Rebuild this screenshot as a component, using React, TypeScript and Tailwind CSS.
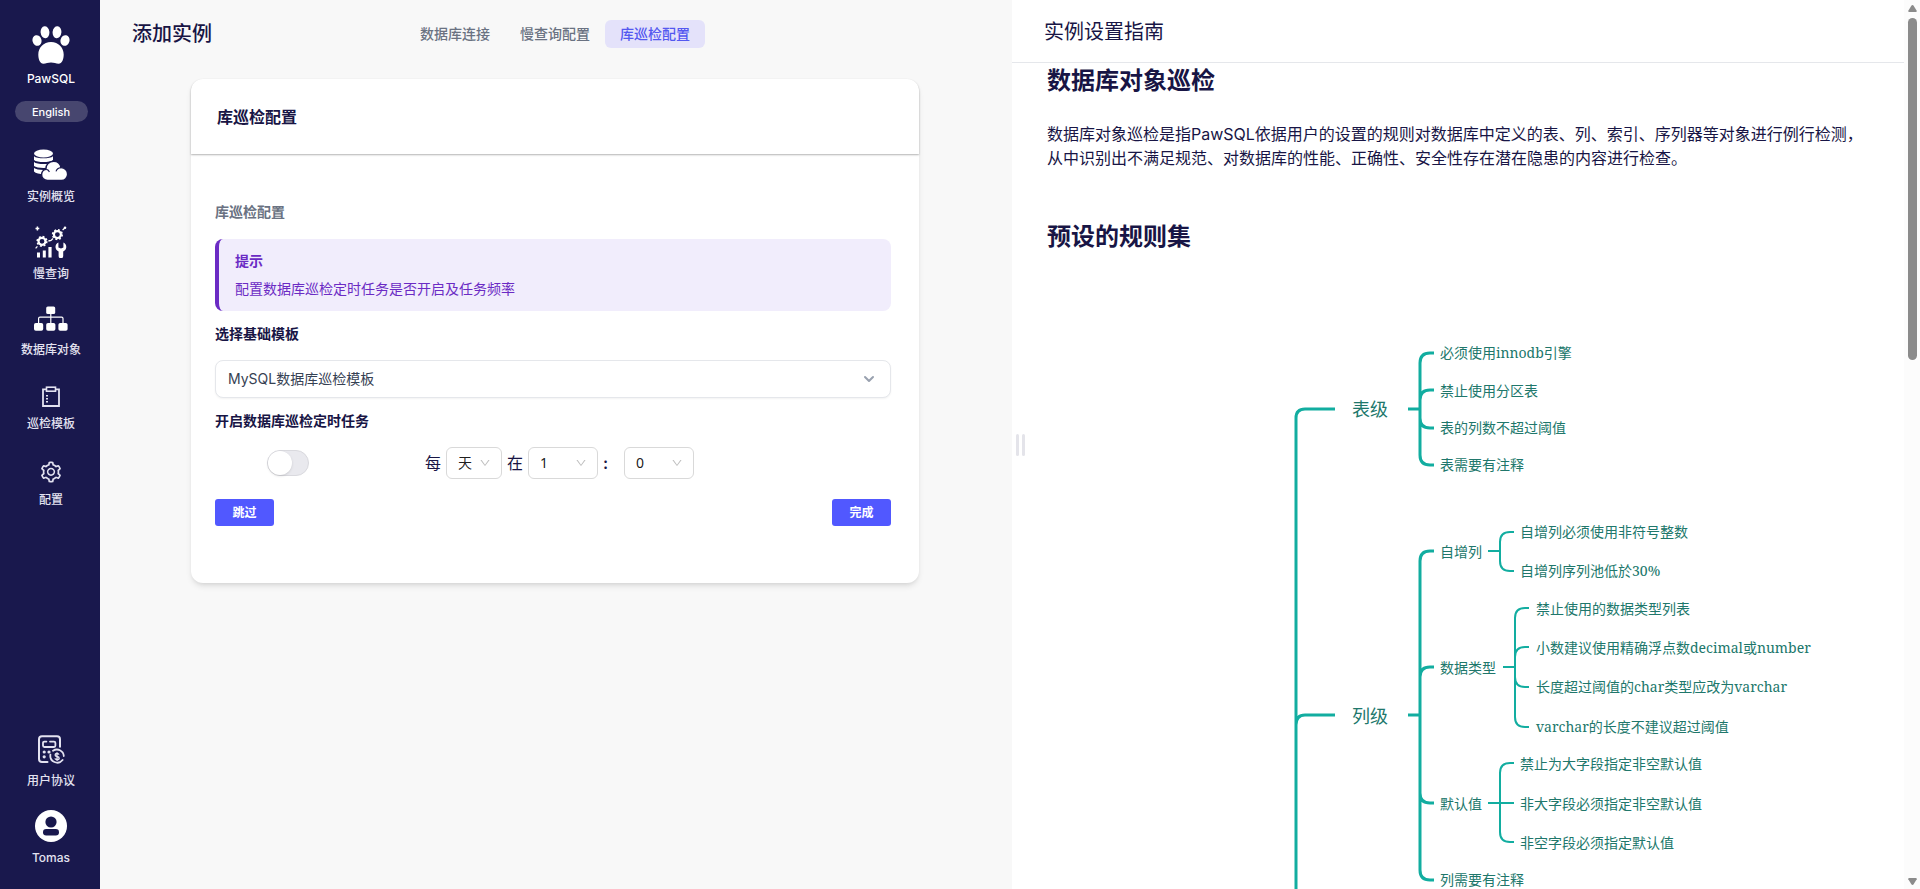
import React from "react";
import { AiOutlineDown, AiOutlineSetting } from "react-icons/ai";
import { HiChevronDown } from "react-icons/hi";

const PawIcon = () => (
  <svg viewBox="0 0 38 38" className="h-[38px] w-[38px]" fill="currentColor" aria-hidden="true">
    <ellipse cx="5" cy="14.5" rx="4.5" ry="5.4" transform="rotate(-14 5 14.5)" />
    <ellipse cx="13" cy="6.2" rx="4.4" ry="6" transform="rotate(-5 13 6.2)" />
    <ellipse cx="25" cy="6.2" rx="4.4" ry="6" transform="rotate(5 25 6.2)" />
    <ellipse cx="33" cy="14.5" rx="4.5" ry="5.4" transform="rotate(14 33 14.5)" />
    <path d="M19 16C11.5 16 6.3 21.6 6.3 28.6C6.3 33.5 8 37.8 11.4 37.8C14 37.8 16 36.6 19 36.6C22 36.6 24 37.8 26.6 37.8C30 37.8 31.7 33.5 31.7 28.6C31.7 21.6 26.5 16 19 16Z" />
  </svg>
);

const DatabaseCloudIcon = () => (
  <svg viewBox="0 0 34 32" className="h-8 w-[34px]" aria-hidden="true">
    <g fill="currentColor">
      <ellipse cx="9.5" cy="4.5" rx="9.5" ry="4" />
      <path d="M0 7.2C3 10 16 10 19 7.2V11C16 13.8 3 13.8 0 11Z" />
      <path d="M0 13C3 15.8 16 15.8 19 13V17C16 19.6 3 19.6 0 17Z" />
      <path d="M0 19C3 21.6 16 21.6 19 19V23C16 26 3 26 0 22.6Z" />
    </g>
    <path
      d="M13.5 31.4C10.2 31.4 7.6 29 7.6 25.8C7.6 23 9.6 20.8 12 20.4C11.6 15.8 15.2 12.2 19.6 12.2C23.6 12.2 26.4 14.9 27 18.6C30.6 18.8 33.6 21.4 33.6 25.2C33.6 28.8 30.8 31.4 27.4 31.4Z"
      fill="currentColor"
      stroke="#19184d"
      strokeWidth="1.4"
    />
    <path d="M12.4 20.4C14 20.6 15 21.6 15.4 23M27 18.6C24.4 18.8 22.6 20.4 22 22.4" fill="none" stroke="#19184d" strokeWidth="1.1" />
  </svg>
);

const AnalysisIcon = () => (
  <svg viewBox="0 0 32 32" className="h-8 w-8" aria-hidden="true">
    <g fill="none" stroke="currentColor">
      <circle cx="7" cy="15.3" r="3.5" strokeWidth="2.2" />
      <circle cx="7" cy="15.3" r="4.8" strokeWidth="1.6" strokeDasharray="1.9 1.87" />
      <circle cx="22.4" cy="8.6" r="3.5" strokeWidth="2.2" />
      <circle cx="22.4" cy="8.6" r="4.8" strokeWidth="1.6" strokeDasharray="1.9 1.87" />
      <path d="M.6 22.4L2.4 20.4M13.4 15L16 14.4L18 12.6M27.6 4L30.4 1.4" strokeWidth="1.3" />
      <path d="M2.4 .6V4.4M.5 2.5H4.3" strokeWidth="1.5" />
    </g>
    <circle cx="30" cy="1.8" r="1.3" fill="currentColor" />
    <g fill="currentColor">
      <path d="M2 26.4H5V31.6H2ZM7.8 24.4H10.8V31.6H7.8ZM13.4 21H16.6V31.6H13.4Z" />
      <path d="M23.4 16.6V21.4L26 22.6L28.4 21.4V16.6C30.6 17.6 31.6 19.6 31.2 21.8C30.9 23.6 29.8 24.8 28.2 25.5V30A2.2 2.2 0 0 1 23.6 30V25.5C22 24.8 20.9 23.6 20.6 21.8C20.2 19.6 21.2 17.6 23.4 16.6Z" />
    </g>
  </svg>
);

const SitemapIcon = () => (
  <svg viewBox="0 0 34 26" className="h-[26px] w-[34px]" aria-hidden="true">
    <g fill="currentColor">
      <rect x="12.2" y="1.5" width="9" height="7.6" rx="1.6" />
      <rect x="0" y="18" width="9.2" height="7.8" rx="1.8" />
      <rect x="12.2" y="18" width="9.2" height="7.8" rx="1.8" />
      <rect x="24.4" y="18" width="9.2" height="7.8" rx="1.8" />
    </g>
    <path d="M16.8 9V18M4.6 18V13.6Q4.6 12.2 6 12.2H27.6Q29 12.2 29 13.6V18" fill="none" stroke="currentColor" strokeWidth="1.2" />
  </svg>
);

const ClipboardIcon = () => (
  <svg viewBox="0 0 20 22" className="h-[22px] w-5" fill="none" stroke="currentColor" aria-hidden="true">
    <path d="M5.5 3.3H2V20H18V3.3H14.5" strokeWidth="1.8" />
    <rect x="5.5" y="1.2" width="9" height="4" strokeWidth="1.6" />
    <path d="M5 9.8H7M5 12.8H7M5 15.8H7" strokeWidth="1.5" />
  </svg>
);

const AgreementIcon = () => (
  <svg viewBox="0 0 28 30" className="h-[30px] w-7" fill="none" stroke="currentColor" aria-hidden="true">
    <path d="M23 12.8V5.2Q23 2.2 20 2.2H5Q2 2.2 2 5.2V25Q2 28 5 28H10.5" strokeWidth="2" strokeLinecap="round" />
    <path d="M9.4 7.6H7.4Q6 7.6 6 9V11.6Q6 13 7.4 13H17Q18.4 13 18.4 11.6V9Q18.4 7.6 17 7.6H13" strokeWidth="1.8" strokeLinecap="round" />
    <g fill="currentColor" stroke="none">
      <circle cx="7.2" cy="18" r="1.6" />
      <circle cx="12" cy="18" r="1.6" />
      <circle cx="7.2" cy="22.8" r="1.6" />
    </g>
    <path d="M16 16.8A6.9 6.9 0 0 1 26.8 22M25.6 26A6.9 6.9 0 0 1 13.4 20.6" strokeWidth="1.8" strokeLinecap="round" />
    <path d="M22 20.6Q21.6 19.5 20 19.5Q18.1 19.5 18.1 20.9Q18.1 22.2 20 22.5Q22.2 22.8 22.2 24.2Q22.2 25.6 20.1 25.6Q18.2 25.6 17.9 24.4M20 18.2V27" strokeWidth="1.3" />
  </svg>
);

const UserIcon = () => (
  <svg viewBox="0 0 32 32" className="h-8 w-8" aria-hidden="true">
    <circle cx="16" cy="16" r="16" fill="currentColor" />
    <circle cx="16" cy="12" r="5.6" fill="#19184d" />
    <rect x="8" y="19" width="16" height="6.4" rx="3.2" fill="#19184d" />
  </svg>
);

type NavItemProps = { label: string; children: React.ReactNode; className?: string; iconBox?: string };

const NavItem = ({ label, children, className = "", iconBox = "h-8 items-center" }: NavItemProps) => (
  <a href="#" className={`flex flex-col items-center text-[#e3e2f0] ${className}`}>
    <span className={`flex justify-center ${iconBox}`}>{children}</span>
    <span className="mt-1.5 text-xs leading-5 font-medium">{label}</span>
  </a>
);

const Sidebar = () => (
  <aside className="flex w-[100px] shrink-0 flex-col items-center bg-[#19184d] pl-0.5 text-white">
    <a href="#" className="mt-[26px] flex flex-col items-center">
      <PawIcon />
      <span className="mt-[5px] text-xs leading-5 font-medium">PawSQL</span>
    </a>
    <button type="button" className="mt-3 h-[21px] w-[73px] rounded-full bg-[#47466f] text-[11px] leading-5 font-medium">
      English
    </button>
    <nav className="mt-[27px] flex flex-col items-center">
      <NavItem label="实例概览"><span className="text-white"><DatabaseCloudIcon /></span></NavItem>
      <NavItem label="慢查询" className="mt-[19px]"><span className="text-white"><AnalysisIcon /></span></NavItem>
      <NavItem label="数据库对象" className="mt-[18px]"><span className="text-white"><SitemapIcon /></span></NavItem>
      <NavItem label="巡检模板" className="mt-5" iconBox="h-7 items-end"><ClipboardIcon /></NavItem>
      <NavItem label="配置" className="mt-[22px]" iconBox="h-7 items-end"><AiOutlineSetting className="h-6 w-6" /></NavItem>
    </nav>
    <nav className="mt-auto flex flex-col items-center pb-[21px]">
      <NavItem label="用户协议"><AgreementIcon /></NavItem>
      <NavItem label="Tomas" className="mt-[19px]"><span className="text-white"><UserIcon /></span></NavItem>
    </nav>
  </aside>
);

type PickerProps = { label: string; options: string[]; className: string };

const Picker = ({ label, options, className }: PickerProps) => (
  <div className={`relative ${className}`}>
    <select
      aria-label={label}
      className="h-8 w-full appearance-none rounded-md border border-[#d9d9d9] bg-white px-[11px] font-['Noto_Sans','Noto_Sans_CJK_SC',sans-serif] text-sm text-black/90"
    >
      {options.map((o) => <option key={o}>{o}</option>)}
    </select>
    <AiOutlineDown className="pointer-events-none absolute top-2.5 right-[11px] h-3 w-3 text-[#bfbfbf]" />
  </div>
);

const tabs = ["数据库连接", "慢查询配置", "库巡检配置"];

const SetupPanel = () => (
  <main className="min-w-0 flex-[911_1_0%] bg-[#f8f8f8] pr-0.5">
    <header className="grid grid-cols-[1fr_auto_1fr] items-center pt-5">
      <h1 className="pl-8 text-xl leading-7 font-medium">添加实例</h1>
      <nav className="flex">
        {tabs.map((tab, i) => (
          <button
            key={tab}
            type="button"
            className={`h-7 rounded-md px-[15px] text-sm font-medium ${i === 2 ? "bg-[#e4e2fa] text-[#5458f0]" : "text-gray-500"}`}
          >
            {tab}
          </button>
        ))}
      </nav>
    </header>

    <section className="mx-auto mt-[31px] w-4/5 rounded-xl bg-white shadow-md">
      <div className="rounded-t-xl px-[26px] pt-6 pb-[23px] shadow-[0_1px_2px_rgba(0,0,0,0.3)]">
        <h2 className="text-base leading-7 font-bold">库巡检配置</h2>
      </div>
      <form className="flex flex-col pt-12 pr-7 pb-[57px] pl-6" onSubmit={(e) => e.preventDefault()}>
        <h3 className="text-sm leading-5 font-semibold text-gray-500">库巡检配置</h3>
        <div className="mt-[17px] flex flex-col gap-2 rounded-lg border-l-4 border-[#6b2bc4] bg-[#f1edfc] px-4 py-3 text-sm leading-5 text-[#6b2bc4]">
          <p className="font-bold">提示</p>
          <p>配置数据库巡检定时任务是否开启及任务频率</p>
        </div>
        <label htmlFor="template" className="mt-[13px] text-sm leading-5 font-bold">选择基础模板</label>
        <div className="relative mt-4">
          <select
            id="template"
            className="h-[38px] w-full appearance-none rounded-lg border border-gray-200 bg-white px-3 text-sm text-gray-700 shadow-xs"
          >
            <option>MySQL数据库巡检模板</option>
          </select>
          <HiChevronDown className="pointer-events-none absolute top-[9px] right-3 h-5 w-5 text-gray-400" />
        </div>
        <label htmlFor="schedule" className="mt-[13px] text-sm leading-5 font-bold">开启数据库巡检定时任务</label>
        <div className="mt-4 flex items-center">
          <div className="flex w-[210px] shrink-0 pl-[52px]">
            <span className="relative flex h-[26px] w-[42px]">
              <input
                id="schedule"
                type="checkbox"
                role="switch"
                className="peer h-full w-full appearance-none rounded-full border border-[#d9d9de] bg-[#e9e9ee] checked:bg-[#5458ff]"
              />
              <span className="pointer-events-none absolute top-px left-px h-6 w-6 rounded-full bg-white shadow-sm peer-checked:left-[17px]" />
            </span>
          </div>
          <span>每</span>
          <Picker label="周期" options={["天", "周", "月"]} className="mx-[5px] w-14" />
          <span>在</span>
          <Picker label="小时" options={["1", "2", "3"]} className="mx-[5px] w-[70px]" />
          <span className="w-4 font-semibold">:</span>
          <Picker label="分钟" options={["0", "15", "30"]} className="ml-[5px] w-[70px]" />
        </div>
        <div className="mt-5 flex justify-between">
          <button type="button" className="h-[27px] w-[59px] rounded-[3px] bg-[#5158ff] text-xs font-bold text-white">跳过</button>
          <button type="submit" className="h-[27px] w-[59px] rounded-[3px] bg-[#5158ff] text-xs font-bold text-white">完成</button>
        </div>
      </form>
    </section>
  </main>
);

type MapNode = { text: string; x: number; y: number; main?: boolean };

const nodes: MapNode[] = [
  { text: "表级", x: 72, y: 89, main: true },
  { text: "必须使用innodb引擎", x: 160, y: 33 },
  { text: "禁止使用分区表", x: 160, y: 71 },
  { text: "表的列数不超过阈值", x: 160, y: 108 },
  { text: "表需要有注释", x: 160, y: 145 },
  { text: "列级", x: 72, y: 396, main: true },
  { text: "自增列", x: 160, y: 232 },
  { text: "自增列必须使用非符号整数", x: 240, y: 212 },
  { text: "自增列序列池低於30%", x: 240, y: 251 },
  { text: "数据类型", x: 160, y: 348 },
  { text: "禁止使用的数据类型列表", x: 256, y: 289 },
  { text: "小数建议使用精确浮点数decimal或number", x: 256, y: 328 },
  { text: "长度超过阈值的char类型应改为varchar", x: 256, y: 367 },
  { text: "varchar的长度不建议超过阈值", x: 256, y: 407 },
  { text: "默认值", x: 160, y: 484 },
  { text: "禁止为大字段指定非空默认值", x: 240, y: 444 },
  { text: "非大字段必须指定非空默认值", x: 240, y: 484 },
  { text: "非空字段必须指定默认值", x: 240, y: 523 },
  { text: "列需要有注释", x: 160, y: 560 },
];

const RuleMap = () => (
  <div className="relative h-[1200px] w-[620px] text-[#20776b]">
    <svg viewBox="0 0 620 1200" className="h-[1200px] w-[620px]" fill="none" stroke="#12ada0" aria-hidden="true">
      <g strokeWidth="3">
        <path d="M16 1200V98Q16 89 25 89H55M16 405Q16 395 25 395H55" />
        <path d="M128 89H140M154 33H150Q140 33 140 43V135Q140 145 150 145H154M140 80Q140 70 150 70H154M140 98Q140 108 150 108H154" />
        <path d="M128 395H140M154 231H150Q140 231 140 241V550Q140 560 150 560H154M140 357Q140 347 150 347H154M140 473Q140 483 150 483H154" />
      </g>
      <g strokeWidth="2">
        <path d="M208 231H220M234 212H230Q220 212 220 222V241Q220 251 230 251H234" />
        <path d="M223 347H235M249 288H245Q235 288 235 298V397Q235 407 245 407H249M235 337Q235 327 245 327H249M235 357Q235 367 245 367H249" />
        <path d="M208 483H234M234 443H230Q220 443 220 453V512Q220 522 230 522H234" />
      </g>
    </svg>
    {nodes.map((n) => (
      <span
        key={n.text}
        className={`absolute -translate-y-1/2 font-['Noto_Serif','DejaVu_Serif','Noto_Sans_CJK_SC',serif] whitespace-nowrap ${n.main ? "text-lg" : "text-sm"}`}
        style={{ left: n.x, top: n.y }}
      >
        {n.text}
      </span>
    ))}
  </div>
);

const GuidePanel = () => (
  <aside className="flex min-w-0 flex-[893_1_0%] bg-white">
    <div className="flex w-[21px] shrink-0 items-center gap-[3px] pl-1" role="separator">
      <span className="h-[22px] w-[3px] rounded-full bg-[#e4e4ea]" />
      <span className="h-[22px] w-[3px] rounded-full bg-[#e4e4ea]" />
    </div>
    <div className="flex min-w-0 flex-1 flex-col">
      <header className="-ml-[21px] border-b border-gray-200 pt-[18px] pb-4 pl-8">
        <h2 className="text-xl leading-7">实例设置指南</h2>
      </header>
      <article className="min-h-0 flex-1 overflow-hidden pr-1 pl-3.5">
        <h2 className="text-2xl leading-9 font-bold">数据库对象巡检</h2>
        <p className="mt-[23px] pr-9 text-base leading-6">
          数据库对象巡检是指PawSQL依据用户的设置的规则对数据库中定义的表、列、索引、序列器等对象进行例行检测，从中识别出不满足规范、对数据库的性能、正确性、安全性存在潜在隐患的内容进行检查。
        </p>
        <h2 className="mt-[49px] text-2xl leading-9 font-bold">预设的规则集</h2>
        <div className="mt-[65px] flex justify-end">
          <RuleMap />
        </div>
      </article>
    </div>
  </aside>
);

const ScrollBar = () => (
  <div className="flex w-4 shrink-0 flex-col items-center bg-[#fcfcfc] text-[#8b8b8b]" aria-hidden="true">
    <svg viewBox="0 0 10 8" className="mt-[5px] h-[7px] w-[9px]" fill="currentColor"><path d="M5 0Q5.8 0 6.3 .8L9.8 6.5Q10 8 9 8H1Q0 8 .2 6.5L3.7 .8Q4.2 0 5 0Z" /></svg>
    <span className="mt-1.5 h-[342px] w-[9px] rounded-full bg-[#8b8b8b]" />
    <svg viewBox="0 0 10 8" className="mt-auto mb-1 h-[7px] w-[9px]" fill="currentColor"><path d="M5 8Q5.8 8 6.3 7.2L9.8 1.5Q10 0 9 0H1Q0 0 .2 1.5L3.7 7.2Q4.2 8 5 8Z" /></svg>
  </div>
);

export default function App() {
  return (
    <div lang="zh-CN" className="flex h-screen overflow-hidden bg-white font-['Inter','Noto_Sans_CJK_SC',sans-serif] text-[#181545]">
      <Sidebar />
      <SetupPanel />
      <GuidePanel />
      <ScrollBar />
    </div>
  );
}
